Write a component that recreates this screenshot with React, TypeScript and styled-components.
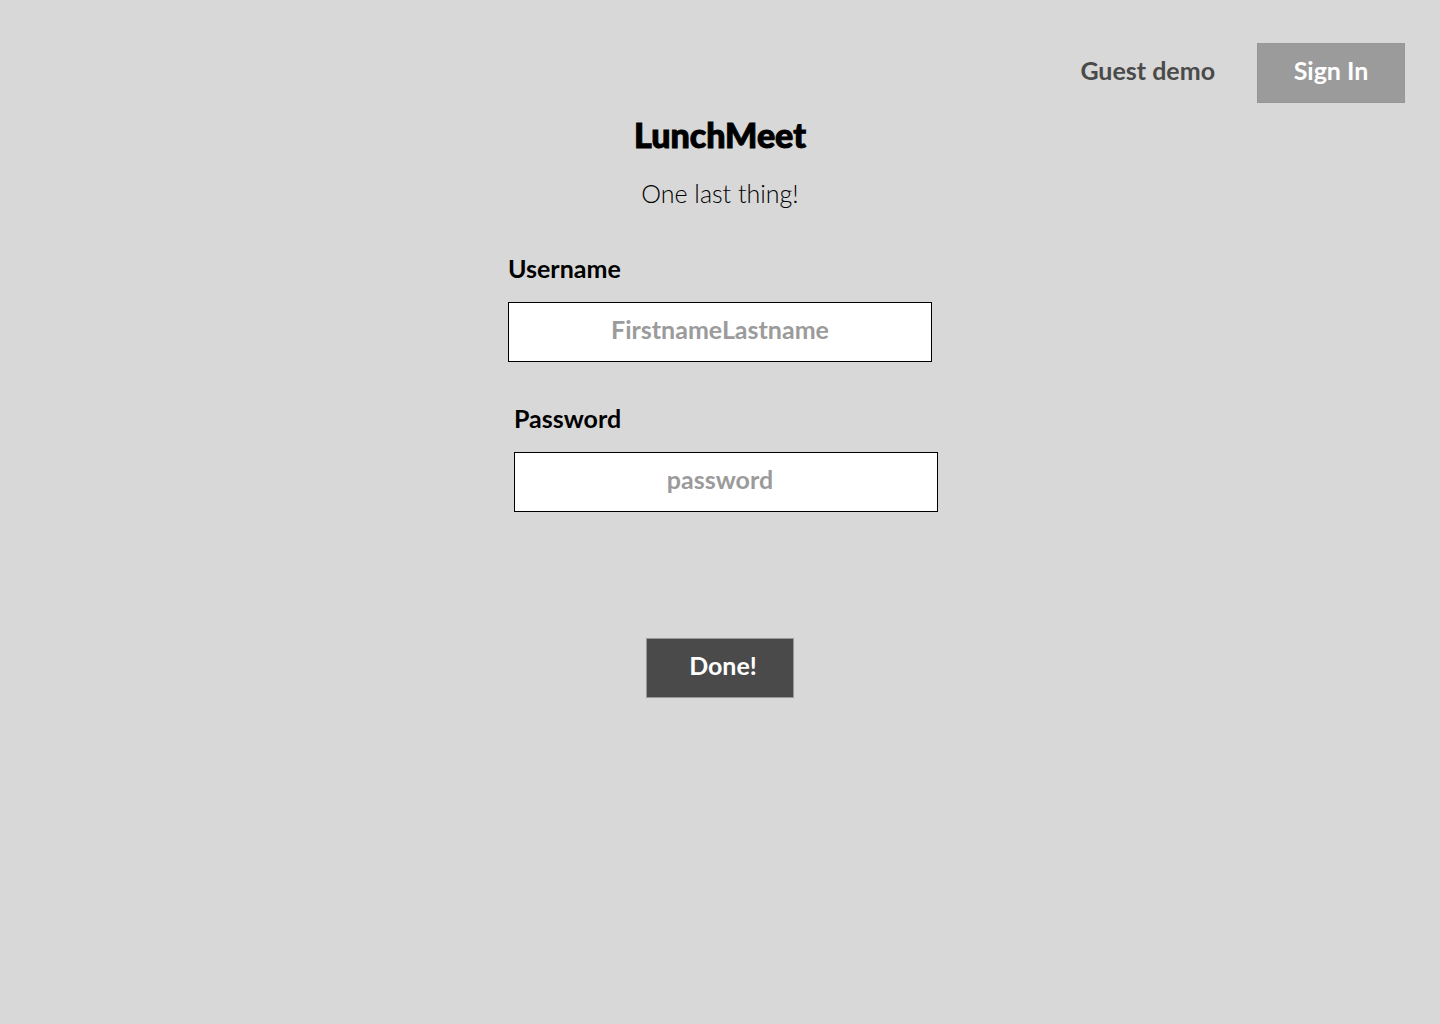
import React from "react";
import styled, { createGlobalStyle } from "styled-components";

const GlobalStyle = createGlobalStyle`
  * { box-sizing: border-box; }
  body {
    margin: 0;
    background: #d8d8d8;
    color: #000;
    font-family: Lato, "Liberation Sans", sans-serif;
    font-size: 25px;
    line-height: 32px;
  }
`;

const Header = styled.header`
  display: flex;
  justify-content: flex-end;
  align-items: center;
  gap: 42px;
  padding: 43px 35px 0;
`;

const GuestLink = styled.a`
  color: #4a4a4a;
  font-weight: 700;
  text-decoration: none;
  padding-bottom: 7px;
`;

const Button = styled.button<{ $primary?: boolean }>`
  width: 148px;
  height: 60px;
  padding: ${(p) => (p.$primary ? "0 0 7px 6px" : "0 0 7px")};
  border: 1px solid #979797;
  border-radius: 0;
  background: ${(p) => (p.$primary ? "#4a4a4a" : "#9b9b9b")};
  color: #fff;
  font: inherit;
  font-weight: 700;
  cursor: pointer;
`;

const Main = styled.main`
  display: flex;
  flex-direction: column;
  align-items: center;
  padding: 12px 16px 40px;
`;

const Brand = styled.h1`
  margin: 0;
  font-size: 34px;
  line-height: 40px;
  font-weight: 900;
  -webkit-text-stroke: 1px #000;
`;

const Tagline = styled.p`
  margin: 22px 0 43px;
  font-weight: 300;
`;

const Form = styled.form`
  display: flex;
  flex-direction: column;
  align-items: center;
  width: 424px;
  max-width: 100%;
`;

const Field = styled.div<{ $indent?: boolean }>`
  display: flex;
  flex-direction: column;
  gap: 18px;
  width: 100%;
  margin-bottom: 40px;
  margin-left: ${(p) => (p.$indent ? "12px" : "0")};
`;

const Label = styled.label`
  font-weight: 700;
`;

const Input = styled.input<{ $indent?: boolean }>`
  width: 100%;
  height: 60px;
  padding: ${(p) => (p.$indent ? "0 12px 7px 0" : "0 0 7px")};
  border: 1px solid #000;
  border-radius: 0;
  background: #fff;
  color: #000;
  font: inherit;
  font-weight: 700;
  text-align: center;
  &::placeholder { color: #9b9b9b; opacity: 1; }
`;

const Actions = styled.div`
  margin-top: 86px;
`;

export default function App() {
  return (
    <>
      <GlobalStyle />
      <Header>
        <GuestLink href="#guest">Guest demo</GuestLink>
        <Button type="button">Sign In</Button>
      </Header>
      <Main>
        <Brand>LunchMeet</Brand>
        <Tagline>One last thing!</Tagline>
        <Form onSubmit={(e) => e.preventDefault()}>
          <Field>
            <Label htmlFor="username">Username</Label>
            <Input id="username" placeholder="FirstnameLastname" />
          </Field>
          <Field $indent>
            <Label htmlFor="password">Password</Label>
            <Input $indent id="password" type="password" placeholder="password" />
          </Field>
          <Actions>
            <Button $primary type="submit">Done!</Button>
          </Actions>
        </Form>
      </Main>
    </>
  );
}
